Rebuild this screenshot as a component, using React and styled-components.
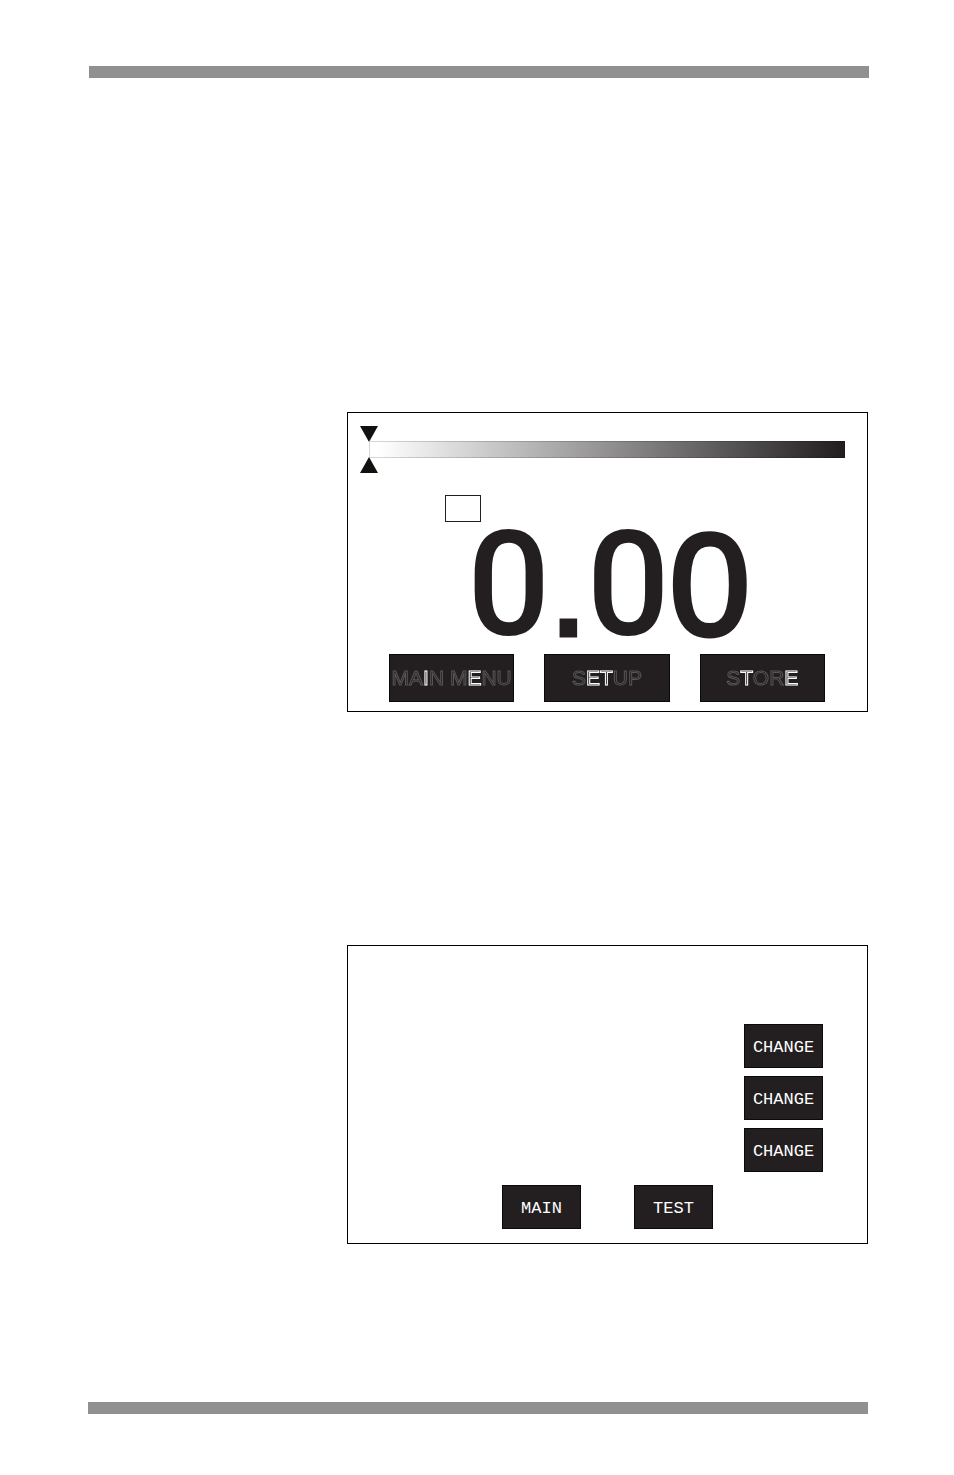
import React from "react";
import styled, { createGlobalStyle } from "styled-components";

const INK = "#231f20";

const GlobalStyle = createGlobalStyle`
  *, *::before, *::after { box-sizing: border-box; }
  body { margin: 0; background: #fff; }
`;

const Page = styled.div`
  display: flex;
  flex-direction: column;
  padding: 66px 86px 61px 88px;
  font-family: "Liberation Sans", Arial, sans-serif;
  color: ${INK};
`;

const Rule = styled.div`
  height: 12px;
  margin: ${({ $shift }) => ($shift ? "0 -1px 0 1px" : "0")};
  background: #909090;
`;

const Content = styled.main`
  display: flex;
  flex-direction: column;
  gap: 233px;
  padding: 334px 0 158px 259px;
`;

const Screen = styled.section`
  display: flex;
  flex-direction: column;
  border: 1px solid #000;
`;

const Gauge = styled.div`
  display: flex;
  flex-direction: column;
  padding: 13px 22px 0 12px;
`;

const Marker = styled.svg`
  display: block;
  width: 18px;
  height: 15px;
  fill: #12110e;
  overflow: visible;
`;

const GaugeBar = styled.div`
  height: 17px;
  margin-left: 9px;
  border: 1px solid rgba(0, 0, 0, 0.16);
  background: linear-gradient(to right, #fff 2%, ${INK} 99%) border-box;
`;

const UnitBox = styled.div`
  width: 36px;
  height: 27px;
  margin: 22px 0 0 97px;
  border: 1px solid ${INK};
`;

const Reading = styled.output`
  display: block;
  height: 132px;
  padding-left: 2px;
  font: 500 146px/128px Roboto, "Liberation Sans", sans-serif;
  text-align: center;
`;

const StrokedGlyph = styled.span`
  font-family: "Liberation Sans", Arial, sans-serif;
  font-size: ${({ $point }) => ($point ? "132px" : "144px")};
  font-weight: 400;
  -webkit-text-stroke: 5px ${INK};
`;

const MenuRow = styled.div`
  display: flex;
  gap: 30px;
  padding: 0 42px 9px 41px;
`;

const Button = styled.button`
  height: ${({ $large }) => ($large ? "48px" : "44px")};
  ${({ $large }) => ($large ? "flex: 1 1 0;" : "width: 79px;")}
  padding: ${({ $large }) => ($large ? "0" : "4px 0 0")};
  border: 1px solid #0b0a0a;
  border-radius: 0;
  background: ${INK};
  color: #fff;
  font: ${({ $large }) =>
    $large
      ? '21px/24px "Liberation Sans", Arial, sans-serif'
      : '17px/20px "Liberation Mono", "Courier New", monospace'};
  white-space: nowrap;
  cursor: pointer;
`;

const Label = styled.span`
  display: block;
  will-change: opacity;
`;

const Outline = styled.span`
  color: ${INK};
  -webkit-text-stroke: 1px ${({ $lit }) => ($lit ? "#fff" : "#595657")};
`;

const ChangeColumn = styled.div`
  display: flex;
  flex-direction: column;
  align-items: flex-end;
  gap: 8px;
  padding: 78px 44px 0 0;
`;

const ActionRow = styled.div`
  display: flex;
  justify-content: center;
  gap: 53px;
  padding: 13px 0 14px;
`;

const MENU = [
  [["MA"], ["I", true], ["N M"], ["E", true], ["NU"]],
  [["S"], ["ET", true], ["UP"]],
  [["S"], ["T", true], ["OR"], ["E", true]],
];

export default function App() {
  return (
    <>
      <GlobalStyle />
      <Page>
        <Rule $shift />
        <Content>
          <Screen>
            <Gauge>
              <Marker viewBox="0 0 18 15" aria-hidden="true">
                <path d="M0 0H18L9 16Z" />
              </Marker>
              <GaugeBar />
              <Marker viewBox="0 0 18 15" aria-hidden="true">
                <path d="M9 -1L18 15H0Z" />
              </Marker>
            </Gauge>
            <UnitBox />
            <Reading>
              0<StrokedGlyph $point>.</StrokedGlyph>0<StrokedGlyph>0</StrokedGlyph>
            </Reading>
            <MenuRow>
              {MENU.map((parts, i) => (
                <Button key={i} type="button" $large>
                  <Label>
                    {parts.map(([text, lit], j) => (
                      <Outline key={j} $lit={lit}>{text}</Outline>
                    ))}
                  </Label>
                </Button>
              ))}
            </MenuRow>
          </Screen>
          <Screen>
            <ChangeColumn>
              <Button type="button">CHANGE</Button>
              <Button type="button">CHANGE</Button>
              <Button type="button">CHANGE</Button>
            </ChangeColumn>
            <ActionRow>
              <Button type="button">MAIN</Button>
              <Button type="button">TEST</Button>
            </ActionRow>
          </Screen>
        </Content>
        <Rule />
      </Page>
    </>
  );
}
